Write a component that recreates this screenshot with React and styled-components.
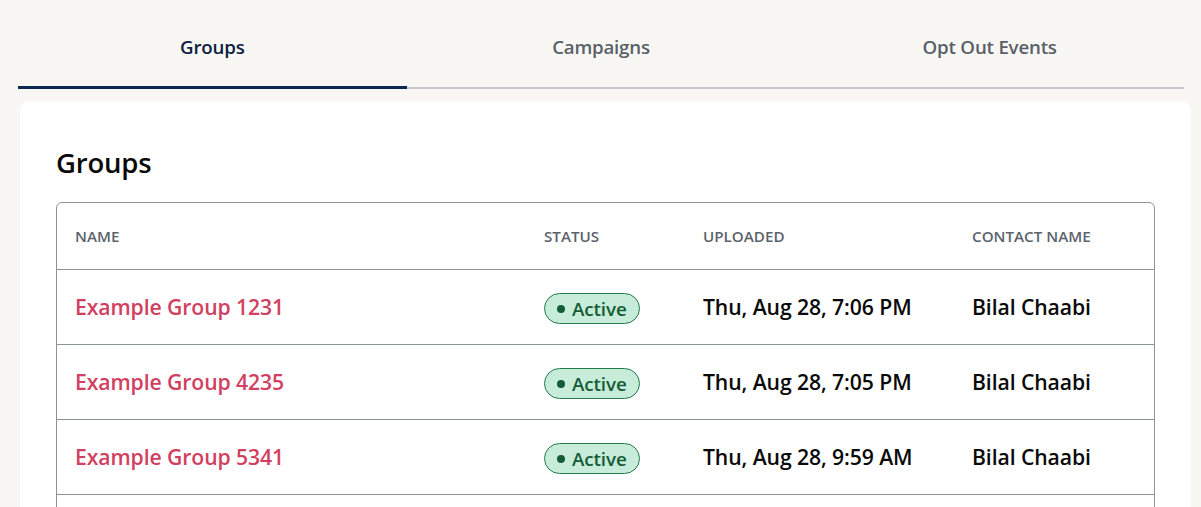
import React from "react";
import styled, { createGlobalStyle } from "styled-components";

const Global = createGlobalStyle`
  html, body { margin: 0; padding: 0; background: #f8f7f4; }
  body { font-family: "Open Sans", "Noto Sans", sans-serif; }
`;

const Page = styled.div`
  width: 1201px;
  height: 507px;
  overflow: hidden;
  box-sizing: border-box;
  padding: 0 17px 0 18px;
`;

const Tabs = styled.div`
  display: grid;
  grid-template-columns: repeat(3, 1fr);
  width: 1166px;
  border-bottom: 2px solid #c5c7ca;
`;

const Tab = styled.div`
  display: flex;
  align-items: center;
  justify-content: center;
  height: 89px;
  box-sizing: border-box;
  padding-top: 6px;
  margin-bottom: -2px;
  font-size: 18.7px;
  font-weight: 600;
  letter-spacing: -0.2px;
  color: ${(p) => (p.$active ? "#0c2240" : "#585f67")};
  border-bottom: 3px solid ${(p) => (p.$active ? "#0c2a4e" : "transparent")};
`;

const Card = styled.div`
  margin: 12px -7px 0 2px;
  background: #ffffff;
  border-radius: 10px 10px 0 0;
  padding: 44px 36px 0 36px;
  height: 500px;
`;

const Title = styled.h2`
  margin: 0 0 21px 0;
  font-size: 27.5px;
  line-height: 36px;
  font-weight: 600;
  letter-spacing: -0.2px;
  color: #0a0a0a;
`;

const Table = styled.div`
  width: 1099px;
  height: 400px;
  border: 1px solid #8c939b;
  border-radius: 6px;
  box-sizing: border-box;
`;

const Row = styled.div`
  display: grid;
  grid-template-columns: 469px 159px 269px 1fr;
  align-items: center;
  height: ${(p) => (p.$head ? "66px" : "74px")};
  border-bottom: 1px solid #8c939b;
`;

const HeadCell = styled.div`
  padding-left: 18px;
  padding-bottom: 1px;
  font-size: 15.2px;
  font-weight: 600;
  text-transform: uppercase;
  color: #5b636c;
`;

const Cell = styled.div`
  padding-left: 18px;
  padding-bottom: 1px;
  font-size: 21.2px;
  font-weight: 600;
  letter-spacing: -0.1px;
  color: ${(p) => p.$color || "#0a0a0a"};
  white-space: nowrap;
`;

const Badge = styled.span`
  display: inline-flex;
  align-items: center;
  gap: 7px;
  height: 31px;
  box-sizing: border-box;
  padding: 0 12px 0 12px;
  margin-top: 4px;
  border: 1px solid #237a4c;
  border-radius: 16px;
  background: #c7ecd9;
  color: #145c37;
  font-size: 18.8px;
  font-weight: 600;
  letter-spacing: -0.1px;
`;

const Dot = styled.span`
  width: 8px;
  height: 8px;
  border-radius: 50%;
  background: #145c37;
`;

const rows = [
  { name: "Example Group 1231", date: "Thu, Aug 28, 7:06 PM" },
  { name: "Example Group 4235", date: "Thu, Aug 28, 7:05 PM" },
  { name: "Example Group 5341", date: "Thu, Aug 28, 9:59 AM" },
];

export default function App() {
  return (
    <>
      <Global />
      <Page>
        <Tabs>
          <Tab $active>Groups</Tab>
          <Tab>Campaigns</Tab>
          <Tab>Opt Out Events</Tab>
        </Tabs>
        <Card>
          <Title>Groups</Title>
          <Table>
            <Row $head>
              <HeadCell>Name</HeadCell>
              <HeadCell>Status</HeadCell>
              <HeadCell>Uploaded</HeadCell>
              <HeadCell>Contact Name</HeadCell>
            </Row>
            {rows.map((r) => (
              <Row key={r.name}>
                <Cell $color="#d1415f">{r.name}</Cell>
                <Cell>
                  <Badge>
                    <Dot />
                    Active
                  </Badge>
                </Cell>
                <Cell>{r.date}</Cell>
                <Cell>Bilal Chaabi</Cell>
              </Row>
            ))}
          </Table>
        </Card>
      </Page>
    </>
  );
}
